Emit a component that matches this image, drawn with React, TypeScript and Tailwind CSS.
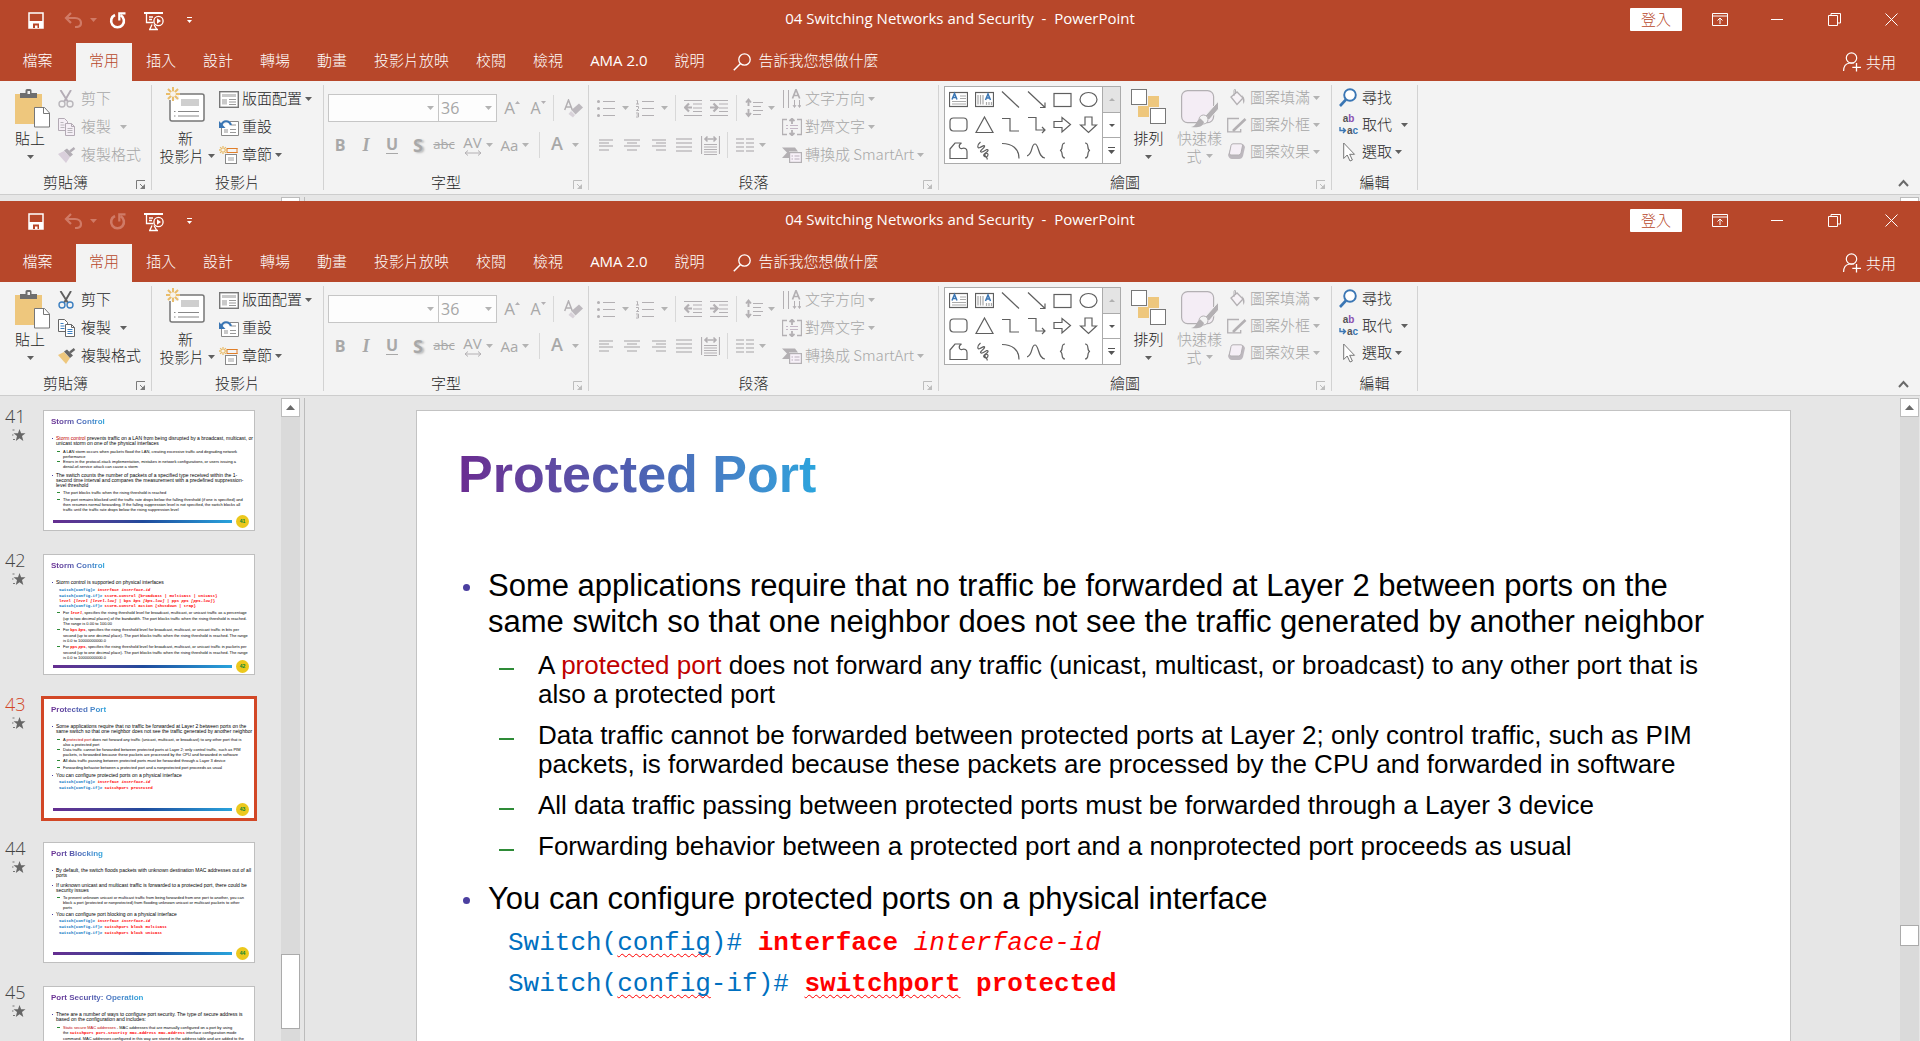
import React from 'react';
import type { ReactNode } from 'react';

/* ---------- small shared pieces ---------- */

type IconProps = { w: number; h: number; children: ReactNode; className?: string };

function Icon({ w, h, children, className }: IconProps) {
  return (
    <svg width={w} height={h} viewBox={`0 0 ${w} ${h}`} fill="none" aria-hidden="true" className={`shrink-0 ${className ?? ''}`}>
      {children}
    </svg>
  );
}

function Arrow({ off = false }: { off?: boolean }) {
  return (
    <Icon w={7} h={4}>
      <path d="M0 0h7L3.500 4z" fill={off ? '#b3b3b3' : '#5f5f5f'} />
    </Icon>
  );
}

function Separator() {
  return <div className="my-1 w-px shrink-0 bg-[#d2d2d2]" />;
}

function Launcher({ off = false }: { off?: boolean }) {
  const c = off ? '#bdbdbd' : '#7a7a7a';
  return (
    <button type="button" aria-label="更多選項" className="flex w-5 shrink-0 items-center justify-end pt-1 pr-[5px]">
      <Icon w={10} h={10}>
        <path d="M.5 9V.5H9" stroke={c} />
        <path d="M4 4l3.500 3.500" stroke={c} />
        <path d="M9 4v5H4z" fill={c} />
      </Icon>
    </button>
  );
}

type GroupProps = { label: string; width: string; launcher?: 'on' | 'off'; children: ReactNode };

function Group({ label, width, launcher, children }: GroupProps) {
  return (
    <>
      <section aria-label={label} className={`flex shrink-0 flex-col ${width}`}>
        <div className="flex min-h-0 flex-1">{children}</div>
        <div className="flex h-[22px] items-center">
          <div className="flex-1 pb-0.5 text-center leading-5 text-[#262626]">{label}</div>
          {launcher && <Launcher off={launcher === 'off'} />}
        </div>
      </section>
      <Separator />
    </>
  );
}

type RowProps = { icon: ReactNode; text: string; off?: boolean; arrow?: boolean; wide?: boolean; short?: boolean };

function RowButton({ icon, text, off, arrow, wide, short }: RowProps) {
  return (
    <button
      type="button"
      disabled={off}
      className={`flex items-center whitespace-nowrap ${short ? 'h-[27px]' : 'h-7'} ${off ? 'text-[#a6a6a6]' : 'text-[#262626]'}`}
    >
      <span className="flex w-[23px] shrink-0 items-center">{icon}</span>
      <span className="pb-0.5 leading-5">{text}</span>
      {arrow && (
        <span className={wide ? 'ml-[9px]' : 'ml-[3px]'}>
          <Arrow off={off} />
        </span>
      )}
    </button>
  );
}

/* ---------- quick access + window icons ---------- */

function SaveIcon() {
  return (
    <Icon w={16} h={17}>
      <path d="M1 1h14v15H1z" stroke="#fff" strokeWidth="1.500" />
      <path d="M1 9h14v7H1z" fill="#fff" />
      <path d="M5 11.500h6V16H9.500v-2.500H7V16H5z" fill="#b7472a" />
    </Icon>
  );
}

function UndoIcon() {
  return (
    <Icon w={18} h={16}>
      <path d="M7 1L2 6l5 5M2 6h9c4 0 6 2.500 6 5 0 2.500-2 4-5 4h-1" stroke="#d07a66" strokeWidth="2.200" />
    </Icon>
  );
}

function RedoIcon({ on }: { on: boolean }) {
  const c = on ? '#fff' : '#d07a66';
  return (
    <Icon w={17} h={17}>
      <path d="M6 3A6.400 6.400 0 1 0 11.500 3.200" stroke={c} strokeWidth="2.600" />
      <path d="M16.500 1.300H10.300V8.500" stroke={c} strokeWidth="2.200" />
    </Icon>
  );
}

function ShowIcon() {
  return (
    <Icon w={20} h={19}>
      <path d="M0 1h19" stroke="#fff" strokeWidth="2" />
      <path d="M2.500 2v8.500h7M5 5h4M5 7.500h3M8 12.500L5.500 18M10 12.500l3 5.500M5 17.500h9" stroke="#fff" strokeWidth="1.300" />
      <circle cx="14.500" cy="9" r="4.600" fill="#b7472a" stroke="#fff" strokeWidth="1.300" />
      <path d="M13 6.200l4 2.800-4 2.800z" fill="#fff" />
    </Icon>
  );
}

function TitleBar({ redo }: { redo: boolean }) {
  return (
    <header className="relative flex h-[43px] items-start justify-between text-white">
      <div className="flex h-10 items-center pl-7">
        <button type="button" aria-label="儲存" className="mr-5"><SaveIcon /></button>
        <button type="button" aria-label="復原" className="flex items-center gap-2">
          <UndoIcon />
          <Icon w={7} h={4}><path d="M0 0h7L3.500 4z" fill="#d07a66" /></Icon>
        </button>
        <button type="button" aria-label="重做" disabled={!redo} className="ml-3"><RedoIcon on={redo} /></button>
        <button type="button" aria-label="從首張投影片" className="ml-[18px] pt-0.5"><ShowIcon /></button>
        <button type="button" aria-label="自訂快速存取工具列" className="ml-[23px]">
          <Icon w={5} h={7}><path d="M0 .5h5" stroke="#fff" /><path d="M0 3h5L2.500 6z" fill="#fff" /></Icon>
        </button>
      </div>
      <h1 className="pointer-events-none absolute inset-x-0 top-0 whitespace-pre text-center font-['Open_Sans','Noto_Sans_CJK_TC',sans-serif] text-[15px] font-normal leading-9">
        {'04 Switching Networks and Security  -  PowerPoint'}
      </h1>
      <div className="flex h-[38px] items-center">
        <button type="button" className="mr-[30px] h-[23px] w-[52px] rounded-[1px] bg-white leading-[22px] text-[#b7472a]">登入</button>
        <button type="button" aria-label="功能區顯示選項" className="mr-[43px]">
          <Icon w={16} h={13}>
            <path d="M.5 .5h15v12H.5zM.5 3h15M8 11V5.500M5.500 7.500L8 5l2.500 2.500" stroke="#fff" />
          </Icon>
        </button>
        <button type="button" aria-label="最小化" className="mr-[45px]">
          <Icon w={12} h={13}><path d="M0 6.500h12" stroke="#fff" /></Icon>
        </button>
        <button type="button" aria-label="還原" className="mr-11">
          <Icon w={13} h={13}><path d="M.5 2.500h9v10h-9zM3 2.500v-2h9.500V10H10" stroke="#fff" /></Icon>
        </button>
        <button type="button" aria-label="關閉" className="mr-[22px]">
          <Icon w={13} h={13}><path d="M.5 .5l12 12M12.500 .5l-12 12" stroke="#fff" /></Icon>
        </button>
      </div>
    </header>
  );
}

const TABS = ['插入', '設計', '轉場', '動畫', '投影片放映', '校閱', '檢視', 'AMA 2.0', '說明'];

function TabBar() {
  return (
    <nav className="flex h-[38px] items-stretch gap-px text-white">
      <button type="button" className="w-[75px] whitespace-nowrap pb-1">檔案</button>
      <button type="button" className="bg-[#f3f3f3] px-[13px] pb-1 text-[#b7472a]">常用</button>
      {TABS.map((t) => (
        <button
          key={t}
          type="button"
          className={`whitespace-nowrap px-[13px] pb-1 ${t.startsWith('AMA') ? "font-['Open_Sans',sans-serif] font-normal" : ''}`}
        >
          {t}
        </button>
      ))}
      <button type="button" className="ml-3.5 flex items-center gap-2 pb-1">
        <Icon w={18} h={18} className="mt-1">
          <circle cx="11.500" cy="6.500" r="5.700" stroke="#fff" strokeWidth="1.300" />
          <path d="M7.500 10.500L.8 17.200" stroke="#fff" strokeWidth="1.500" />
        </Icon>
        告訴我您想做什麼
      </button>
      <button type="button" className="ml-auto mr-6 flex items-center gap-1">
        <Icon w={19} h={20}>
          <circle cx="8.500" cy="6" r="5.200" stroke="#fff" strokeWidth="1.200" />
          <path d="M.6 19c0-4.500 2.500-7.500 6-8h4.500" stroke="#fff" strokeWidth="1.200" />
          <path d="M13.500 11v8.500M9.300 15.300H18" stroke="#fff" strokeWidth="1.300" />
        </Icon>
        共用
      </button>
    </nav>
  );
}

/* ---------- ribbon icons ---------- */

const G = '#b3b0b3';

function PasteIcon() {
  return (
    <Icon w={35} h={39}>
      <path d="M0 5h27v30H0z" fill="#eec77d" />
      <path d="M5 9V4h5.500V1.500Q10.500 0 12 0h3q1.500 0 1.500 1.500V4H22v5z" fill="#6e6e6e" />
      <rect x="12.500" y="2" width="2.500" height="3" fill="#f3f3f3" />
      <path d="M19.500 18.500h10l5 5.500v14H19.500z" fill="#fff" stroke="#777" />
      <path d="M28.500 18.500v6h6" stroke="#777" />
    </Icon>
  );
}

function CutIcon({ off }: { off: boolean }) {
  const c = off ? '#b4adb6' : '#5f5f5f';
  const b = off ? '#b9b6bb' : '#3c7fc0';
  return (
    <Icon w={16} h={18}>
      <path d="M2.500 0l7.500 12M13 0L6 12" stroke={c} strokeWidth="1.900" />
      <circle cx="4" cy="14" r="3" stroke={b} strokeWidth="1.400" />
      <circle cx="12" cy="14" r="3" stroke={b} strokeWidth="1.400" />
    </Icon>
  );
}

function CopyIcon({ off }: { off: boolean }) {
  const c = off ? '#b3aab4' : '#666';
  const b = off ? '#b9b6bb' : '#3c7fc0';
  const f = off ? '#f5eff6' : '#fff';
  return (
    <Icon w={17} h={18}>
      <path d="M.5 .5h6l3 3v9h-9z" fill={f} stroke={c} />
      <path d="M2.500 4.500h3M2.500 7h4M2.500 9.500h4" stroke={b} />
      <path d="M7.500 5.500h6l3 3v9h-9z" fill={f} stroke={c} />
      <path d="M13.500 5.500v3h3" stroke={c} />
      <path d="M9.500 10.500h5M9.500 12.500h5M9.500 14.500h5" stroke={b} />
    </Icon>
  );
}

function BrushIcon({ off }: { off: boolean }) {
  return (
    <Icon w={18} h={16}>
      <path d="M0 7l6-3 6 6-4 6z" fill={off ? '#d9cfdb' : '#eec77d'} />
      <path d="M6 3.500l3-2 6 6-3 2.500z" fill={off ? '#b2adb4' : '#666'} />
      <path d="M12 4.500L16.500 1" stroke={off ? '#b2adb4' : '#666'} strokeWidth="2.400" />
    </Icon>
  );
}

function Spark({ x, y, r }: { x: number; y: number; r: number }) {
  const d = r * 0.72;
  return (
    <g>
      <path
        d={`M${x} ${y - r}V${y + r}M${x - r} ${y}H${x + r}M${x - d} ${y - d}L${x + d} ${y + d}M${x + d} ${y - d}L${x - d} ${y + d}`}
        stroke="#e9bd6b"
        strokeWidth={r > 5 ? 2 : 1.3}
      />
      <circle cx={x} cy={y} r={r * 0.4} fill="#f8f3ea" />
    </g>
  );
}

function NewSlideIcon() {
  return (
    <Icon w={39} h={35}>
      <rect x="4" y="7" width="34" height="27" rx="2" fill="#fff" stroke="#777" strokeWidth="1.500" />
      <path d="M15 12h18v7H15z" fill="#cfcfcf" />
      <path d="M8 24.500h1.500M12 24.500h21M8 29h1.500M12 29h21" stroke="#888" />
      <path d="M0 0h13v13H0z" fill="#f3f3f3" />
      <Spark x={7} y={7} r={7} />
    </Icon>
  );
}

function LayoutIcon() {
  return (
    <Icon w={20} h={17}>
      <rect x=".7" y=".7" width="18.600" height="15.600" fill="#fff" stroke="#777" strokeWidth="1.400" />
      <path d="M3 3h14v3H3zM3 8h5v5.500H3z" fill="#c9c9c9" />
      <path d="M10 8.500h7M10 11h7M10 13.500h7" stroke="#999" />
    </Icon>
  );
}

function ResetIcon() {
  return (
    <Icon w={20} h={17}>
      <path d="M2.500 7v9.500h17V2.500H11" fill="#fff" stroke="#888" />
      <path d="M12 5h5v2h-5zM5 10h4v4H5z" fill="#c9c9c9" />
      <path d="M11 10.500h6M11 13.500h6" stroke="#999" />
      <path d="M12 6C10 1 4 1 2.500 6" stroke="#3a76b4" strokeWidth="2.200" />
      <path d="M0 2v7h6.500z" fill="#3a76b4" />
    </Icon>
  );
}

function SectionIcon() {
  return (
    <Icon w={19} h={18}>
      <path d="M8 2.500h10.500M8 6.500h10.500M8 2v5M18 2v5" stroke="#e07e28" />
      <rect x="6.500" y="8.500" width="11" height="9" fill="#fff" stroke="#888" />
      <path d="M9 11h6v4H9z" fill="#cfcfcf" />
      <Spark x={4} y={4} r={4} />
    </Icon>
  );
}

function EraserIcon() {
  return (
    <Icon w={19} h={19}>
      <path d="M.7 11L4.500 1l3.800 10M2 8h5" stroke={G} strokeWidth="1.500" />
      <path d="M15 4.500l4 4-7.500 7-4-4.500z" fill="#bcb8bd" />
      <path d="M7 12l4 4-2 2.500-4.500-3.500z" fill="#d8d2d9" />
    </Icon>
  );
}

function Lines({ rows, w = 18 }: { rows: [number, number, number][]; w?: number }) {
  return (
    <Icon w={w} h={18}>
      {rows.map(([x1, x2, y], i) => (
        <path key={i} d={`M${x1} ${y}H${x2}`} stroke={G} strokeWidth="1.200" />
      ))}
    </Icon>
  );
}

function BulletsIcon() {
  return (
    <Icon w={18} h={18}>
      <path d="M6 2.500h12M6 9.500h12M6 16.500h12" stroke={G} />
      <circle cx="1.500" cy="2.500" r="1.500" fill={G} /><circle cx="1.500" cy="9.500" r="1.500" fill={G} /><circle cx="1.500" cy="16.500" r="1.500" fill={G} />
    </Icon>
  );
}

function NumbersIcon() {
  return (
    <Icon w={18} h={19}>
      <path d="M6 2.500h12M6 9.500h12M6 16.500h12" stroke={G} />
      <path d="M.5 1.500h1V5M0 5h3M0 7.500h2.500v2L.5 11.500H3M0 14h2.500v4H0M.5 16h2" stroke={G} />
    </Icon>
  );
}

function IndentIcon({ out }: { out?: boolean }) {
  return (
    <Icon w={19} h={18}>
      <path d="M0 1.500h18M9 5h9M9 9h9M9 12.500h9M0 16.500h18" stroke={G} strokeWidth="1.200" />
      {out ? <path d="M8 8.500H1.500M5 4.500l-4 4 4 4" stroke={G} strokeWidth="2.200" /> : <path d="M0 8.500h6.500M3.500 4.500l4 4-4 4" stroke={G} strokeWidth="2.200" />}
    </Icon>
  );
}

function SpacingIcon() {
  return (
    <Icon w={18} h={20}>
      <path d="M8 4.500h10M8 8.500h8M8 12.500h10M8 16.500h8" stroke={G} />
      <path d="M3.500 1v7M1 4.500L3.500 1.500 6 4.500M3.500 11v7M1 15l2.500 3L6 15" stroke={G} strokeWidth="1.900" />
    </Icon>
  );
}

function SpreadIcon() {
  return (
    <Icon w={19} h={20}>
      <path d="M.5 1v18M18.500 1v18M3 9.500h13M3 12h13M3 14.500h13M3 17h13M3 19.500h13" stroke={G} strokeWidth="1.200" />
      <path d="M4 4h11M6.500 1.500L4 4l2.500 2.500M12.500 1.500L15 4l-2.500 2.500" stroke={G} strokeWidth="1.600" />
    </Icon>
  );
}

function TextDirIcon() {
  return (
    <Icon w={19} h={20}>
      <path d="M1.500 1v18M6.500 1v18M12.500 11v7M17.500 11v7M11 16l1.500 2.500L14 16M16 16l1.500 2.500L19 16" stroke={G} />
      <path d="M10.500 9.500L14 .5l3.700 9M12 6.500h4.500" stroke={G} strokeWidth="1.700" />
    </Icon>
  );
}

function AlignTextIcon() {
  return (
    <Icon w={20} h={18}>
      <path d="M5 1.500H.5v15H5M15 1.500h4.500v15H15" stroke={G} strokeWidth="1.300" />
      <path d="M4 7.500h2M8 7.500h8M4 10.500h2M8 10.500h8" stroke="#c4b8c6" />
      <path d="M10 6V1M7.500 3L10 .7 12.500 3M10 12v5M7.500 15l2.500 2.300 2.500-2.300" stroke={G} strokeWidth="1.800" />
    </Icon>
  );
}

function SmartArtIcon() {
  return (
    <Icon w={20} h={16}>
      <path d="M0 .5h13l3 4H7v6.500H0l5-5.500z" fill={G} />
      <rect x="7.600" y="5.600" width="11.800" height="9.800" fill="#f7f1f8" stroke={G} strokeWidth="1.200" />
      <path d="M9.500 9h1.500M12.500 9h5M9.500 12h1.500M12.500 12h5" stroke="#b9afbb" />
    </Icon>
  );
}

const SHAPES: ReactNode[] = [
  <g key="tb"><rect x=".5" y="2.500" width="18" height="14" fill="#fff" /><path d="M11 6h6M11 8.500h6M3 11.500h14M3 14h14" stroke="#aaa" /><path d="M3 9.500l2.500-6 2.500 6M4 7.500h3" stroke="#3a76b4" strokeWidth="1.500" /></g>,
  <g key="vt"><rect x=".5" y="2.500" width="18" height="14" fill="#fff" /><path d="M3 5v9.500M5.500 5v9.500M8 5v9.500M11.500 12v3M14 12v3M16.500 12v3" stroke="#aaa" /><path d="M10.500 10L13 4l2.500 6M11.500 8h3" stroke="#3a76b4" strokeWidth="1.500" /></g>,
  <path key="ln" d="M1 1.500l17 16" />,
  <path key="ar" d="M1 1.500l17 16M13 17.500h5v-5" />,
  <rect key="re" x="1" y="3.500" width="17" height="13" />,
  <ellipse key="el" cx="9.500" cy="9.500" rx="8.500" ry="7" />,
  <rect key="rr" x="1" y="3" width="17" height="13" rx="3.500" />,
  <path key="tr" d="M9.500 2L18 17.500H1z" />,
  <path key="el1" d="M1 3.500h8v12.500h9" />,
  <path key="el2" d="M1 2.500h8V15h9M15 12l3 3-3 3" />,
  <path key="ra" d="M1 6.500h8v-4l8.500 7L9 17v-4.500H1z" />,
  <path key="da" d="M6 2h7v8h4.500l-8 7.500L1.500 10H6z" />,
  <path key="fr" d="M1 8l5-6h6.500c-4 2-2 6.500.5 5.500 2.500-.8 5 0 5 3V17.500H1z" />,
  <path key="sc" d="M5.500 1C2 4 2 8 5 6.500s5-3 4.500-1S4 10 6 11s6-4 7-2-6 4-4 6 4 .5 4-1.500-4-1.500-3 1 3 2 2 4" />,
  <path key="cv" d="M1 2.500c10 0 17 5 17 15" />,
  <path key="wv" d="M0 15c6-2 4-12 8-12s3 14 10 14" />,
  <path key="lb" d="M12 2c-5 0-1 7-5 7.500 4 .5 0 7.500 5 7.500" />,
  <path key="rb" d="M6 2c5 0 1 7 5 7.500-4 .5 0 7.500-5 7.500" />,
];

function ShapeGallery() {
  return (
    <div className="mt-[5px] ml-[5px] flex h-[78px] w-[177px] border border-[#ababab] bg-white">
      <div className="grid flex-1 grid-cols-6 items-center justify-items-center">
        {SHAPES.map((s, i) => (
          <button key={i} type="button" aria-label={`圖案 ${i + 1}`}>
            <svg width="19" height="19" viewBox="0 0 19 19" fill="none" stroke="#5f5f5f" strokeWidth="1.200" aria-hidden="true">{s}</svg>
          </button>
        ))}
      </div>
      <div className="flex w-[18px] flex-col divide-y divide-[#ababab] border-l border-[#ababab]">
        <button type="button" aria-label="上一列" className="flex flex-1 items-center justify-center bg-[#e4e4e4]">
          <Icon w={6} h={3}><path d="M0 3h6L3 0z" fill="#b0b0b0" /></Icon>
        </button>
        <button type="button" aria-label="下一列" className="flex flex-1 items-center justify-center"><Icon w={6} h={3}><path d="M0 0h6L3 3z" fill="#555" /></Icon></button>
        <button type="button" aria-label="其他" className="flex flex-1 items-center justify-center">
          <Icon w={7} h={8}><path d="M0 .5h7" stroke="#555" /><path d="M0 3h7L3.500 7z" fill="#555" /></Icon>
        </button>
      </div>
    </div>
  );
}

function ArrangeIcon() {
  return (
    <Icon w={35} h={36}>
      <path d="M17 7h11v11H17zM7 17h11v11H7z" fill="#eec77d" />
      <rect x=".5" y=".5" width="15" height="15" fill="#fff" stroke="#777" />
      <rect x="19.500" y="19.500" width="15" height="15" fill="#fff" stroke="#777" />
    </Icon>
  );
}

function QuickStyleIcon() {
  return (
    <Icon w={38} h={38}>
      <rect x=".6" y=".6" width="32" height="32" rx="6" fill="#f4edf5" stroke={G} strokeWidth="1.200" />
      <path d="M37.500 11v8L28 30l-4-4z" fill={G} stroke="#f3f3f3" />
      <circle cx="22.500" cy="29.500" r="4.500" fill="#f3f3f3" stroke={G} />
      <path d="M10 37c6-1 5-7 9.500-8.500l3.500 3.500c-1 5-7 6-13 5z" fill={G} />
    </Icon>
  );
}

function FillIcon() {
  return (
    <Icon w={19} h={18}>
      <path d="M4 8l6-5 6 6-6 6.500z" stroke={G} strokeWidth="1.300" fill="#f7f3f7" />
      <path d="M7 7V1.500Q7 0 8.500.7V5" stroke={G} />
      <path d="M15 6c3 3 3 6 1.500 9z" fill={G} />
    </Icon>
  );
}

function OutlineIcon() {
  return (
    <Icon w={20} h={16}>
      <path d="M12 1.500H.7v13.300h13V12" stroke={G} strokeWidth="1.300" />
      <path d="M18.500 2L9 11l-3 3" stroke={G} strokeWidth="2.600" />
    </Icon>
  );
}

function EffectIcon() {
  return (
    <Icon w={19} h={17}>
      <path d="M5 1h10q2 0 3 3l-2 9q-1 3-4 3H5q-3 0-4-4z" fill="#bdb8be" />
      <path d="M6 .8h8q2 0 1.500 2L14 10q-.5 2-2.500 2H4q-2 0-1.500-2L4 2.500Q4.500.8 6 .8z" fill="#f5eff6" stroke={G} />
    </Icon>
  );
}

function FindIcon() {
  return (
    <Icon w={18} h={19}>
      <circle cx="11" cy="7" r="5.800" fill="#fff" stroke="#3a76b4" strokeWidth="1.900" />
      <path d="M7 11.500L1 18" stroke="#3a76b4" strokeWidth="2.600" />
    </Icon>
  );
}

function ReplaceIcon() {
  return (
    <span aria-hidden="true" className="flex flex-col font-['Liberation_Sans',sans-serif] text-[10px] font-bold leading-3 text-[#555]">
      <span>a<span className="text-[#8b4fb0]">b</span></span>
      <span className="flex items-center">
        <Icon w={8} h={7}><path d="M1 0v3.500h5M4 1l2.500 2.500L4 6" stroke="#3a76b4" strokeWidth="1.400" /></Icon>
        a<span className="text-[#3a76b4]">c</span>
      </span>
    </span>
  );
}

function PointerIcon() {
  return (
    <Icon w={16} h={20} className="ml-1">
      <path d="M.7 1v15.500L4.200 13l2.800 6 2.400-1-2.700-5.700h4.800z" fill="#fff" stroke="#777" />
    </Icon>
  );
}

/* ---------- ribbon groups ---------- */

function ClipboardGroup({ off }: { off: boolean }) {
  return (
    <Group label="剪貼簿" width="w-[151px]" launcher="on">
      <button type="button" className="ml-[15px] flex w-[35px] flex-col items-start pt-2 text-[#262626]">
        <PasteIcon />
        <span className="-mt-px leading-[22px] whitespace-nowrap">貼上</span>
        <span className="ml-3 pt-1.5"><Arrow /></span>
      </button>
      <div className="ml-2 flex flex-col items-start pt-1">
        <RowButton icon={<CutIcon off={off} />} text="剪下" off={off} />
        <RowButton icon={<CopyIcon off={off} />} text="複製" off={off} arrow wide />
        <RowButton icon={<BrushIcon off={off} />} text="複製格式" off={off} />
      </div>
    </Group>
  );
}

function SlidesGroup() {
  return (
    <Group label="投影片" width="w-[171px]">
      <button type="button" className="flex w-[67px] flex-col items-center pt-1.5 text-[#262626]">
        <NewSlideIcon />
        <span className="mt-[5px] leading-[22px]">新</span>
        <span className="-mt-1 flex items-center gap-[3px] pl-[3px] whitespace-nowrap leading-[22px]">投影片<Arrow /></span>
      </button>
      <div className="flex flex-col items-start pt-1">
        <RowButton icon={<LayoutIcon />} text="版面配置" arrow />
        <RowButton icon={<ResetIcon />} text="重設" />
        <RowButton icon={<SectionIcon />} text="章節" arrow />
      </div>
    </Group>
  );
}

function Cell({ label, children, width = 'w-[26px]' }: { label: string; children: ReactNode; width?: string }) {
  return (
    <button type="button" disabled aria-label={label} className={`flex h-full shrink-0 items-center justify-center ${width}`}>
      {children}
    </button>
  );
}

function ComboBox({ label, value, width }: { label: string; value: string; width: string }) {
  return (
    <div className={`flex h-full items-center border border-[#c6c6c6] bg-[#fdfdfd] ${width}`}>
      <input aria-label={label} defaultValue={value} className="w-0 flex-1 bg-transparent pl-0.5 text-base text-[#a6a6a6] outline-none" />
      <button type="button" aria-label={`${label}清單`} className="pr-1"><Arrow off /></button>
    </div>
  );
}

function FontGroup() {
  return (
    <Group label="字型" width="w-[264px]" launcher="off">
      <div className="flex flex-col pt-[13px] font-['Open_Sans',sans-serif] font-normal text-[#a8a8a8]">
        <div className="flex h-7 items-center pl-1">
          <ComboBox label="字型" value="" width="w-[111px]" />
          <ComboBox label="字型大小" value="36" width="-ml-px w-[59px]" />
          <div className="mr-0.5 ml-0.5 flex h-full">
            <Cell label="放大字型">
              <span className="text-[17px]">A</span>
              <Icon w={5} h={3} className="mb-3"><path d="M0 3h5L2.500 0z" fill={G} /></Icon>
            </Cell>
            <Cell label="縮小字型">
              <span className="text-base">A</span>
              <Icon w={5} h={3} className="mb-3"><path d="M0 0h5L2.500 3z" fill={G} /></Icon>
            </Cell>
          </div>
          <div className="h-[26px] w-px bg-[#d8d8d8]" />
          <div className="ml-1.5 h-full"><Cell label="清除格式設定"><EraserIcon /></Cell></div>
        </div>
        <div className="mt-2.5 flex h-[26px] items-center pl-[3px]">
          <Cell label="粗體"><b className="text-base">B</b></Cell>
          <Cell label="斜體"><i className="font-['Liberation_Serif',serif] text-lg font-bold">I</i></Cell>
          <Cell label="底線"><b className="border-b border-[#a8a8a8] text-base leading-[17px]">U</b></Cell>
          <Cell label="文字陰影"><b className="text-lg [text-shadow:2px_1px_2px_#bbb]">S</b></Cell>
          <Cell label="刪除線"><span className="text-[13px] line-through">abc</span></Cell>
          <Cell label="字元間距" width="w-[42px]">
            <span className="flex flex-col items-center text-[15px] leading-[15px]">
              AV
              <Icon w={18} h={6}><path d="M1 3h16M4 .5L1 3l3 2.500M14 .5L17 3l-3 2.500" stroke={G} /></Icon>
            </span>
            <span className="ml-1"><Arrow off /></span>
          </Cell>
          <Cell label="大小寫轉換" width="w-8">
            <span className="mr-1 text-[15px]">Aa</span><Arrow off />
          </Cell>
          <div className="ml-2 h-full w-px bg-[#d8d8d8]" />
          <Cell label="字型色彩" width="w-[50px]">
            <span className="mr-[9px] mb-1 text-lg font-semibold leading-6">A</span><Arrow off />
          </Cell>
        </div>
      </div>
    </Group>
  );
}

function ParagraphGroup() {
  return (
    <Group label="段落" width="w-[349px]" launcher="off">
      <div className="flex w-[193px] shrink-0 flex-col pt-[13px]">
        <div className="flex h-7 items-center pl-2">
          <button type="button" disabled aria-label="項目符號" className="flex items-center gap-[7px]"><BulletsIcon /><Arrow off /></button>
          <button type="button" disabled aria-label="編號" className="ml-[7px] flex items-center gap-[7px]"><NumbersIcon /><Arrow off /></button>
          <div className="ml-[7px] h-[26px] w-px bg-[#d8d8d8]" />
          <button type="button" disabled aria-label="減少清單階層" className="ml-2"><IndentIcon out /></button>
          <button type="button" disabled aria-label="增加清單階層" className="ml-[7px]"><IndentIcon /></button>
          <div className="ml-[7px] h-[26px] w-px bg-[#d8d8d8]" />
          <button type="button" disabled aria-label="行距" className="ml-2 flex items-center gap-[5px]"><SpacingIcon /><Arrow off /></button>
        </div>
        <div className="mt-2.5 flex h-[26px] items-center pl-1">
          <Cell label="靠左對齊"><Lines w={15} rows={[[0, 14, 4], [0, 10, 7], [0, 14, 10], [0, 10, 14]]} /></Cell>
          <Cell label="置中"><Lines w={16} rows={[[0, 16, 4], [3, 13, 7], [0, 16, 10], [3, 13, 14]]} /></Cell>
          <Cell label="靠右對齊"><Lines w={15} rows={[[1, 15, 4], [5, 15, 7], [1, 15, 10], [5, 15, 14]]} /></Cell>
          <Cell label="左右對齊"><Lines w={16} rows={[[0, 16, 3], [0, 16, 7], [0, 16, 11], [0, 16, 15]]} /></Cell>
          <Cell label="分散對齊"><SpreadIcon /></Cell>
          <div className="ml-1 h-full w-px bg-[#d8d8d8]" />
          <button type="button" disabled aria-label="欄" className="ml-2 flex items-center gap-[5px]">
            <Lines rows={[[0, 8, 3], [10, 18, 3], [0, 8, 7], [10, 18, 7], [0, 8, 11], [10, 18, 11], [0, 8, 15], [10, 18, 15]]} /><Arrow off />
          </button>
        </div>
      </div>
      <div className="flex flex-col items-start pt-1">
        <RowButton icon={<TextDirIcon />} text="文字方向" off arrow />
        <RowButton icon={<AlignTextIcon />} text="對齊文字" off arrow />
        <RowButton icon={<SmartArtIcon />} text="轉換成 SmartArt" off arrow />
      </div>
    </Group>
  );
}

function DrawingGroup() {
  return (
    <Group label="繪圖" width="w-[392px]" launcher="off">
      <ShapeGallery />
      <button type="button" className="ml-2.5 flex w-[35px] flex-col items-center pt-2 text-[#262626]">
        <ArrangeIcon />
        <span className="mt-0.5 whitespace-nowrap leading-[22px]">排列</span>
        <span className="pt-1.5"><Arrow /></span>
      </button>
      <button type="button" disabled className="ml-2 flex w-[51px] flex-col items-center pt-[9px] text-[#a6a6a6]">
        <QuickStyleIcon />
        <span className="-mt-px whitespace-nowrap leading-[22px]">快速樣</span>
        <span className="-mt-1 flex items-center gap-1 leading-[22px]">式<Arrow off /></span>
      </button>
      <div className="ml-0.5 flex flex-col items-start pt-[3px]">
        <RowButton icon={<FillIcon />} text="圖案填滿" off arrow short />
        <RowButton icon={<OutlineIcon />} text="圖案外框" off arrow short />
        <RowButton icon={<EffectIcon />} text="圖案效果" off arrow short />
      </div>
    </Group>
  );
}

function EditingGroup() {
  return (
    <Group label="編輯" width="w-[85px]">
      <div className="ml-[7px] flex flex-col items-start pt-[3px]">
        <RowButton icon={<FindIcon />} text="尋找" short />
        <RowButton icon={<ReplaceIcon />} text="取代" arrow wide short />
        <RowButton icon={<PointerIcon />} text="選取" arrow short />
      </div>
    </Group>
  );
}

function Ribbon({ clipboardOff }: { clipboardOff: boolean }) {
  return (
    <div className="flex h-[114px] border-b border-[#cdcdcd] bg-[#f3f3f3]">
      <ClipboardGroup off={clipboardOff} />
      <SlidesGroup />
      <FontGroup />
      <ParagraphGroup />
      <DrawingGroup />
      <EditingGroup />
      <button type="button" aria-label="摺疊功能區" className="mr-[11px] mb-[7px] ml-auto self-end">
        <Icon w={11} h={8}><path d="M1 7l4.500-5L10 7" stroke="#6a6a6a" strokeWidth="2" /></Icon>
      </button>
    </div>
  );
}

/* ---------- slide list ---------- */

type Item = { k: 'a' | 'b' | 'm'; mt: string; t: ReactNode };

const R = ({ children }: { children: ReactNode }) => <span className="text-[#c00000]">{children}</span>;
const C = ({ children }: { children: ReactNode }) => <span className="font-['Liberation_Mono',monospace] font-bold text-[#ff0000]">{children}</span>;
const V = ({ children }: { children: ReactNode }) => <span className="font-['Liberation_Mono',monospace] font-bold italic text-[#ff0000]">{children}</span>;
const IFACE = <>Switch(config)# <C>interface</C> <V>interface-id</V></>;

const THUMBS: { n: number; title: string; items: Item[] }[] = [
  {
    n: 41,
    title: 'Storm Control',
    items: [
      { k: 'a', mt: 'mt-0', t: <><R>Storm control</R> prevents traffic on a LAN from being disrupted by a broadcast, multicast, or<br />unicast storm on one of the physical interfaces</> },
      { k: 'b', mt: 'mt-[3px]', t: <>A LAN storm occurs when packets flood the LAN, creating excessive traffic and degrading network<br />performance</> },
      { k: 'b', mt: 'mt-0', t: <>Errors in the protocol-stack implementation, mistakes in network configurations, or users issuing a<br />denial-of-service attack can cause a storm</> },
      { k: 'a', mt: 'mt-1', t: <>The switch counts the number of packets of a specified type received within the 1-<br />second time interval and compares the measurement with a predefined suppression-<br />level threshold</> },
      { k: 'b', mt: 'mt-0.5', t: 'The port blocks traffic when the rising threshold is reached' },
      { k: 'b', mt: 'mt-0.5', t: <>The port remains blocked until the traffic rate drops below the falling threshold (if one is specified) and<br />then resumes normal forwarding. If the falling suppression level is not specified, the switch blocks all<br />traffic until the traffic rate drops below the rising suppression level</> },
    ],
  },
  {
    n: 42,
    title: 'Storm Control',
    items: [
      { k: 'a', mt: 'mt-0', t: 'Storm control is supported on physical interfaces' },
      { k: 'm', mt: 'mt-[3px]', t: IFACE },
      { k: 'm', mt: 'mt-px', t: <>Switch(config-if)# <C>storm-control {'{broadcast | multicast | unicast}'}<br />level {'{'}</C><V>level [level-low]</V><C> | bps </C><V>bps [bps-low]</V><C> | pps </C><V>pps [pps-low]</V><C>{'}'}</C></> },
      { k: 'm', mt: 'mt-0', t: <>Switch(config-if)# <C>storm-control action {'{shutdown | trap}'}</C></> },
      { k: 'b', mt: 'mt-px', t: <>For <V>level</V>, specifies the rising threshold level for broadcast, multicast, or unicast traffic as a percentage<br />(up to two decimal places) of the bandwidth. The port blocks traffic when the rising threshold is reached.<br />The range is 0.00 to 100.00</> },
      { k: 'b', mt: 'mt-px', t: <>For <C>bps</C> <V>bps</V>, specifies the rising threshold level for broadcast, multicast, or unicast traffic in bits per<br />second (up to one decimal place). The port blocks traffic when the rising threshold is reached. The range<br />is 0.0 to 10000000000.0</> },
      { k: 'b', mt: 'mt-px', t: <>For <C>pps</C> <V>pps</V>, specifies the rising threshold level for broadcast, multicast, or unicast traffic in packets per<br />second (up to one decimal place). The port blocks traffic when the rising threshold is reached. The range<br />is 0.0 to 10000000000.0</> },
    ],
  },
  {
    n: 43,
    title: 'Protected Port',
    items: [
      { k: 'a', mt: 'mt-0', t: <>Some applications require that no traffic be forwarded at Layer 2 between ports on the<br />same switch so that one neighbor does not see the traffic generated by another neighbor</> },
      { k: 'b', mt: 'mt-[3px]', t: <>A <R>protected port</R> does not forward any traffic (unicast, multicast, or broadcast) to any other port that is<br />also a protected port</> },
      { k: 'b', mt: 'mt-0', t: <>Data traffic cannot be forwarded between protected ports at Layer 2; only control traffic, such as PIM<br />packets, is forwarded because these packets are processed by the CPU and forwarded in software</> },
      { k: 'b', mt: 'mt-px', t: 'All data traffic passing between protected ports must be forwarded through a Layer 3 device' },
      { k: 'b', mt: 'mt-0.5', t: 'Forwarding behavior between a protected port and a nonprotected port proceeds as usual' },
      { k: 'a', mt: 'mt-[3px]', t: 'You can configure protected ports on a physical interface' },
      { k: 'm', mt: 'mt-0.5', t: IFACE },
      { k: 'm', mt: 'mt-px', t: <>Switch(config-if)# <C>switchport protected</C></> },
    ],
  },
  {
    n: 44,
    title: 'Port Blocking',
    items: [
      { k: 'a', mt: 'mt-0', t: <>By default, the switch floods packets with unknown destination MAC addresses out of all<br />ports</> },
      { k: 'a', mt: 'mt-[5px]', t: <>If unknown unicast and multicast traffic is forwarded to a protected port, there could be<br />security issues</> },
      { k: 'b', mt: 'mt-0.5', t: <>To prevent unknown unicast or multicast traffic from being forwarded from one port to another, you can<br />block a port (protected or nonprotected) from flooding unknown unicast or multicast packets to other<br />ports</> },
      { k: 'a', mt: 'mt-0.5', t: 'You can configure port blocking on a physical interface' },
      { k: 'm', mt: 'mt-0.5', t: IFACE },
      { k: 'm', mt: 'mt-px', t: <>Switch(config-if)# <C>switchport block multicast</C></> },
      { k: 'm', mt: 'mt-px', t: <>Switch(config-if)# <C>switchport block unicast</C></> },
    ],
  },
  {
    n: 45,
    title: 'Port Security: Operation',
    items: [
      { k: 'a', mt: 'mt-0', t: <>There are a number of ways to configure port security. The type of secure address is<br />based on the configuration and includes:</> },
      { k: 'b', mt: 'mt-[3px]', t: <><R>Static secure MAC addresses</R> - MAC addresses that are manually configured on a port by using<br />the <C>switchport port-security mac-address mac-address</C> interface configuration mode<br />command. MAC addresses configured in this way are stored in the address table and are added to the<br />running configuration on the switch</> },
    ],
  },
];

const ITEM_STYLE = {
  a: 'pl-[5px] text-[5px] text-black',
  b: 'pl-3 text-[4px] text-black',
  m: 'pl-2 text-[4px] font-bold text-[#0070c0] font-[\'Liberation_Mono\',monospace]',
};

function ThumbItem({ item }: { item: Item }) {
  return (
    <li className={`relative whitespace-nowrap leading-[5px] ${ITEM_STYLE[item.k]} ${item.mt}`}>
      {item.k === 'a' && <span className="absolute top-0.5 left-px size-px bg-[#4b3fa0]" />}
      {item.k === 'b' && <span className="absolute top-0.5 left-1.5 h-px w-[3px] bg-[#2e8b37]" />}
      {item.t}
    </li>
  );
}

function SlideThumb({ slide, active }: { slide: (typeof THUMBS)[number]; active: boolean }) {
  return (
    <li className="mb-[23px] flex h-[121px] shrink-0">
      <div className={`flex w-[43px] shrink-0 flex-col pl-[5px] font-['Open_Sans',sans-serif] ${active ? 'text-[#d24726]' : 'text-[#444]'}`}>
        <span className="text-lg leading-3">{slide.n}</span>
        <Icon w={14} h={12} className="mt-[7px] ml-[7px]">
          <path d="M7.500 0l1.600 4.200h4.400l-3.500 2.800L11.300 12 7.500 9.200 3.800 12 5 7 1.500 4.200H6z" fill="#666" />
          <path d="M.5 1h2M0 6h1.500M1 10.500h2" stroke="#777" />
        </Icon>
      </div>
      <button
        type="button"
        aria-label={`投影片 ${slide.n}`}
        aria-current={active}
        className={`flex w-[212px] flex-col overflow-hidden border bg-white text-left font-['Liberation_Sans',sans-serif] font-normal ${active ? 'border-[#d24726] outline-2 outline-[#d24726]' : 'border-[#bfbfbf]'}`}
      >
        <span className="mt-[6px] ml-[7px] self-start bg-linear-to-r from-[#6a2c91] via-[#4d60b2] to-[#2aa4dd] bg-clip-text text-[8px] font-bold leading-[10px] text-transparent">
          {slide.title}
        </span>
        <ul className="mt-[9px] ml-[7px]">
          {slide.items.map((it, i) => <ThumbItem key={i} item={it} />)}
        </ul>
        <span className="mt-auto mb-0.5 ml-[9px] flex items-center gap-1">
          <span className="h-[3px] w-[179px] bg-linear-to-r from-[#652d90] via-[#1f4a9c] to-[#29a3dc]" />
          <span className="flex size-[13px] items-center justify-center rounded-full bg-[#ecc81c] text-[5px] font-bold text-green-700">{slide.n}</span>
        </span>
      </button>
    </li>
  );
}

/* ---------- scroll bars and slide ---------- */

function ScrollBar({ thumb }: { thumb: string }) {
  return (
    <div className="flex w-[19px] shrink-0 flex-col bg-[#dadada]">
      <div className="h-0.5 shrink-0 bg-[#e6e6e6]" />
      <button type="button" aria-label="向上捲動" className="flex h-[19px] shrink-0 items-center justify-center border border-[#bcbcbc] bg-white">
        <Icon w={9} h={5}><path d="M0 5h9L4.500 0z" fill="#6a6a6a" /></Icon>
      </button>
      <div className={`shrink-0 border border-[#ababab] bg-white ${thumb}`} />
    </div>
  );
}

const Wavy = ({ children }: { children: ReactNode }) => (
  <span className="underline decoration-[#ff0000] decoration-wavy decoration-1 underline-offset-3 [text-decoration-skip-ink:none]">{children}</span>
);

function Bullet({ children, className = '' }: { children: ReactNode; className?: string }) {
  return (
    <li className={`flex text-[31px] leading-9 ${className}`}>
      <span className="mt-4 mr-[18px] ml-[5px] size-[7px] shrink-0 rounded-full bg-[#4b3fa0]" />
      <span className="whitespace-nowrap">{children}</span>
    </li>
  );
}

function Dash({ children, className = '' }: { children: ReactNode; className?: string }) {
  return (
    <li className={`flex pl-[41px] text-[26px] leading-[29px] ${className}`}>
      <span className="mt-[17px] mr-6 h-0.5 w-[15px] shrink-0 bg-[#2e8b37]" />
      <span className="whitespace-nowrap">{children}</span>
    </li>
  );
}

function Slide() {
  return (
    <article className="h-full overflow-hidden border border-b-0 border-[#c3c3c3] bg-white pl-[41px] font-['Liberation_Sans',sans-serif] font-normal text-black">
      <h2 className="mt-[33px] w-fit bg-linear-to-r from-[#6a2c91] via-[#4d60b2] to-[#2aa4dd] bg-clip-text text-[52px] font-bold leading-[60px] text-transparent">
        Protected Port
      </h2>
      <ul className="mt-16">
        <Bullet>
          Some applications require that no traffic be forwarded at Layer 2 between ports on the<br />
          same switch so that one neighbor does not see the traffic generated by another neighbor
        </Bullet>
        <Dash className="mt-[11px]">
          A <span className="text-[#c00000]">protected port</span> does not forward any traffic (unicast, multicast, or broadcast) to any other port that is<br />
          also a protected port
        </Dash>
        <Dash className="mt-3">
          Data traffic cannot be forwarded between protected ports at Layer 2; only control traffic, such as PIM<br />
          packets, is forwarded because these packets are processed by the CPU and forwarded in software
        </Dash>
        <Dash className="mt-3">All data traffic passing between protected ports must be forwarded through a Layer 3 device</Dash>
        <Dash className="mt-3">Forwarding behavior between a protected port and a nonprotected port proceeds as usual</Dash>
        <Bullet className="mt-5">You can configure protected ports on a physical interface</Bullet>
      </ul>
      <div className="pl-[50px] font-['Liberation_Mono',monospace] text-[26px] leading-[29px] text-[#0070c0]">
        <p className="mt-3">
          Switch(<Wavy>config</Wavy>)# <b className="text-[#ff0000]">interface</b> <i className="text-[#ff0000]">interface-id</i>
        </p>
        <p className="mt-3">
          Switch(<Wavy>config</Wavy>-if)# <b className="text-[#ff0000]"><Wavy>switchport</Wavy> protected</b>
        </p>
      </div>
    </article>
  );
}

function Workspace({ filled }: { filled: boolean }) {
  return (
    <div className="flex min-h-0 flex-1 bg-[#e6e6e6]">
      <ul className="w-[281px] shrink-0 overflow-hidden pt-3.5">
        {filled && THUMBS.map((s) => <SlideThumb key={s.n} slide={s} active={s.n === 43} />)}
      </ul>
      <ScrollBar thumb="mt-[537px] h-[75px]" />
      <div className="mt-0.5 ml-1 w-px shrink-0 bg-[#bcbcbc]" />
      <main className="min-w-0 flex-1 pt-3.5 pr-[109px] pl-[111px]">{filled && <Slide />}</main>
      <ScrollBar thumb="mt-[508px] h-[21px]" />
      <div className="w-px shrink-0 bg-[#e6e6e6]" />
    </div>
  );
}

function AppWindow({ front, className }: { front: boolean; className: string }) {
  return (
    <div className={`flex flex-col overflow-hidden bg-[#b7472a] ${className}`}>
      <TitleBar redo={!front} />
      <TabBar />
      <Ribbon clipboardOff={!front} />
      <Workspace filled={front} />
    </div>
  );
}

export default function App() {
  return (
    <div className="flex h-screen flex-col overflow-hidden font-['Noto_Sans_CJK_TC',sans-serif] text-[15px] font-light">
      <AppWindow front={false} className="h-[201px] shrink-0" />
      <AppWindow front className="min-h-0 flex-1" />
    </div>
  );
}
